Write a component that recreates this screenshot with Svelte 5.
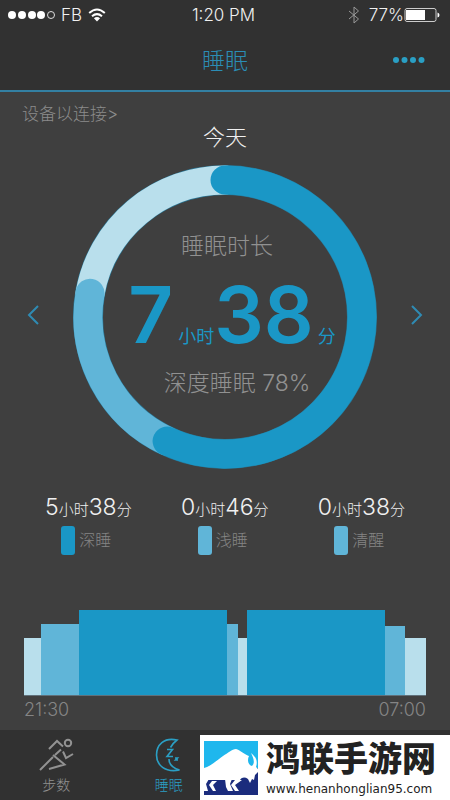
<script lang="ts">
  type Level = 'deep' | 'light' | 'awake';

  const ring = { size: 304, radius: 137, stroke: 29 };

  // degrees clockwise from twelve o'clock, painted back to front
  const arcs: { level: Level; from: number; to: number }[] = [
    { level: 'awake', from: 280, to: 360 },
    { level: 'light', from: 205, to: 280 },
    { level: 'deep', from: 0, to: 205 },
  ];

  const stats = [
    { hours: 5, minutes: 38, label: '深睡', tone: 'deep' },
    { hours: 0, minutes: 46, label: '浅睡', tone: 'light' },
    { hours: 0, minutes: 38, label: '清醒', tone: 'light' },
  ];

  const phases: { level: Level; span: number; height: number }[] = [
    { level: 'awake', span: 17, height: 57 },
    { level: 'light', span: 38, height: 71 },
    { level: 'deep', span: 148, height: 85 },
    { level: 'light', span: 11, height: 71 },
    { level: 'awake', span: 9, height: 57 },
    { level: 'deep', span: 138, height: 85 },
    { level: 'light', span: 20, height: 69 },
    { level: 'awake', span: 21, height: 57 },
  ];

  function arcPath(from: number, to: number) {
    const c = ring.size / 2;
    const point = (deg: number) => {
      const a = ((deg - 90) * Math.PI) / 180;
      return `${c + ring.radius * Math.cos(a)} ${c + ring.radius * Math.sin(a)}`;
    };
    return `M${point(from)} A${ring.radius} ${ring.radius} 0 ${to - from > 180 ? 1 : 0} 1 ${point(to)}`;
  }
</script>

<div class="screen">
  <header>
    <div class="status">
      <div class="carrier">
        <svg class="signal" viewBox="0 0 48 10" aria-hidden="true">
          <circle cx="5" cy="5" r="4" /><circle cx="15" cy="5" r="4" />
          <circle cx="25" cy="5" r="4" /><circle cx="34" cy="5" r="4" />
          <circle class="empty" cx="44" cy="5" r="3.5" />
        </svg>
        <span>FB</span>
        <svg class="wifi" viewBox="0 0 18 14" aria-hidden="true">
          <path d="M1.2 5Q9-2 16.8 5M4 8.2Q9 4 14 8.2" />
          <path class="dot" d="M9 13.6 5.9 10.3Q9 7.8 12.1 10.3Z" />
        </svg>
      </div>
      <span>1:20 PM</span>
      <div class="power">
        <svg class="bluetooth" viewBox="0 0 12 18" aria-hidden="true">
          <path d="M1 5 10.5 13 6 17V1L10.5 5 1 13" />
        </svg>
        <span>77%</span>
        <svg class="battery" viewBox="0 0 36 14" aria-hidden="true">
          <rect class="case" x="1" y=".5" width="31" height="13" rx="2" />
          <rect x="2" y="2" width="19" height="10" />
          <path d="M33.5 4.5Q35.5 5 35.5 7T33.5 9.5Z" />
        </svg>
      </div>
    </div>
    <div class="title">
      <h1>睡眠</h1>
      <button type="button" class="more" aria-label="更多">
        <svg viewBox="0 0 32 6" aria-hidden="true">
          <circle cx="3" cy="3" r="3" /><circle cx="11.5" cy="3" r="3" />
          <circle cx="20" cy="3" r="3" /><circle cx="28.5" cy="3" r="3" />
        </svg>
      </button>
    </div>
  </header>

  <main>
    <a class="device" href="#device">设备以连接&gt;</a>
    <h2>今天</h2>

    <div class="day">
      <button type="button" class="step" aria-label="前一天">
        <svg viewBox="0 0 12 20" aria-hidden="true"><path d="M11 1 2 10 11 19" /></svg>
      </button>
      <div class="ring">
        <svg viewBox="0 0 {ring.size} {ring.size}" aria-hidden="true">
          <circle class="rim" cx={ring.size / 2} cy={ring.size / 2} r={ring.radius} stroke-width={ring.stroke + 1} />
          {#each arcs as arc}
            <path class={arc.level} d={arcPath(arc.from, arc.to)} stroke-width={ring.stroke} />
          {/each}
        </svg>
        <div class="summary">
          <p class="caption">睡眠时长</p>
          <div class="total">
            <strong>7</strong><span class="hours">小时</span><strong>38</strong><span class="minutes">分</span>
          </div>
          <p class="quality">深度睡眠 78%</p>
        </div>
      </div>
      <button type="button" class="step" aria-label="后一天">
        <svg viewBox="0 0 12 20" aria-hidden="true"><path d="M1 1 10 10 1 19" /></svg>
      </button>
    </div>

    <ul class="stats">
      {#each stats as s}
        <li>
          <div class="time">{s.hours}<small>小时</small>{s.minutes}<small>分</small></div>
          <div class="key"><i class={s.tone}></i>{s.label}</div>
        </li>
      {/each}
    </ul>

    <section class="chart" aria-label="睡眠阶段">
      <div class="bars">
        {#each phases as p}
          <div class={p.level} style="flex-grow: {p.span}; height: {p.height}px"></div>
        {/each}
      </div>
      <div class="axis"><span>21:30</span><span>07:00</span></div>
    </section>
  </main>

  <nav>
    <a href="#steps">
      <svg viewBox="0 0 36 34" aria-hidden="true">
        <path d="M11 11 19 3 25 8.5M2 32 15 19M17 17 23 11.5M15 17 26.5 26.5 11 31M25 13.5 28 20 35 16" />
        <circle cx="30" cy="5" r="3.2" />
      </svg>
      步数
    </a>
    <a href="#sleep" class="active" aria-current="page">
      <svg viewBox="0 0 36 34" aria-hidden="true">
        <path d="M19.5 9.5Q22 5 26 2C13-1 5.500 7 5.500 17S14 35 28.500 32Q18 29 18 21" />
        <path d="M16 11.5H21.5L16 18.500H22" />
        <path d="M24 20H26.500L24.500 22H27" />
      </svg>
      睡眠
    </a>
  </nav>

  <aside class="promo">
    <svg viewBox="0 0 54 54" aria-hidden="true">
      <path fill="#1fb7ed" d="M0 0H54V38H0Z" />
      <path fill="#1b2c7d" d="M0 38H36L54 27V54H0Z" />
      <g fill="#fff">
        <path d="M0 27C8 25 14 18 19 15C24 12 28 8 32 8C36 9 40 13 45 15C43 19 44 24 48 25C51 22 50 18 47 12C52 16 54 20 52 26L54 28V31L51 34 50 39 48 38 46 42 44 38C41 36 38 36 36 39H0Z" />
        <path d="M21 38H28L26 43 29 50H24L22 46Z" />
        <path d="M31 39H38L31 44 35 50H31L27 44Z" />
        <path d="M0 38H5L2 43 4 50H0Z" />
        <path d="M8 40H13L9 44 12 50H9L5 44Z" />
      </g>
    </svg>
    <div>
      <b>鸿联手游网</b>
      <span>www.henanhonglian95.com</span>
    </div>
  </aside>
</div>

<style>
  :global(body) { margin: 0; background: #3f3f3f; }

  .screen {
    --deep: #1a97c6;
    --light: #60b5d8;
    --awake: #b9dfec;
    position: relative;
    display: flex;
    flex-direction: column;
    min-height: 100vh;
    background: #3f3f3f;
    color: #f0f0f0;
    font-family: Inter, "Noto Sans CJK SC", sans-serif;
    font-weight: 300;
  }
  svg { display: block; fill: none; }
  button { padding: 0; border: 0; background: none; cursor: pointer; }
  a { color: inherit; text-decoration: none; }
  h1, h2, p, ul { margin: 0; padding: 0; font-weight: 300; }

  header { background: #313131; border-bottom: 2px solid #3380a3; }
  .status {
    display: grid;
    grid-template-columns: 1fr auto 1fr;
    align-items: center;
    height: 30px;
    padding: 0 10px 0 7px;
    font-size: 17px;
  }
  .carrier, .power { display: flex; align-items: center; gap: 6px; }
  .power { justify-content: flex-end; gap: 0; }
  .signal { width: 48px; height: 10px; fill: #fff; }
  .signal .empty { fill: none; stroke: #ddd; }
  .wifi { width: 18px; height: 14px; stroke: #fff; stroke-width: 2; }
  .wifi .dot { fill: #fff; stroke: none; }
  .bluetooth { width: 12px; height: 18px; margin-right: 9px; stroke: #999; }
  .battery { width: 36px; height: 14px; fill: #fff; }
  .battery .case { fill: none; stroke: #ccc; }

  .title {
    display: grid;
    grid-template-columns: 1fr auto 1fr;
    align-items: center;
    height: 60px;
    padding: 0 25px;
  }
  h1 { grid-column: 2; padding-bottom: 3px; font-size: 23px; color: #2b8db5; }
  .more { justify-self: end; }
  .more svg { width: 32px; height: 6px; fill: #2a9fc4; }

  main { flex: 1; }
  .device { display: block; margin: 12px 22px 0; font-size: 17px; line-height: 20px; color: #8c8c8c; }
  h2 { font-size: 22px; line-height: 26px; text-align: center; }

  .day { display: flex; align-items: center; justify-content: space-between; margin-top: 15px; padding: 0 27px; }
  .step { padding-bottom: 4px; }
  .step svg { width: 12px; height: 20px; stroke: #2f8bb3; stroke-width: 2; }
  .ring { display: grid; width: 304px; }
  .ring > * { grid-area: 1 / 1; }
  .ring path { stroke-linecap: round; }
  .ring .rim { stroke: #2a7593; }
  .ring .deep { stroke: var(--deep); }
  .ring .light { stroke: var(--light); }
  .ring .awake { stroke: var(--awake); }

  .summary { display: flex; flex-direction: column; align-items: center; padding-top: 65px; }
  .summary p { font-size: 23px; line-height: 32px; color: #919191; }
  .summary .caption { padding-left: 4px; }
  .summary .quality { padding-left: 24px; }
  .total { display: flex; align-items: baseline; height: 105px; padding-left: 14px; line-height: 105px; color: var(--deep); }
  .total strong { font-size: 78px; font-weight: 600; }
  .total span { font-size: 18px; font-weight: 400; }
  .hours { padding-left: 5px; }
  .minutes { padding-left: 4px; }

  .stats { display: flex; justify-content: space-between; margin-top: 22px; padding: 0 45px; list-style: none; }
  .time { font-size: 23px; line-height: 32px; white-space: nowrap; }
  .time small { font-size: 15px; }
  .key { display: flex; align-items: center; justify-content: center; gap: 4px; padding-right: 4px; font-size: 16px; line-height: 29px; color: #858585; }
  .key i { width: 14px; height: 29px; border-radius: 3px; }

  .deep { background: var(--deep); }
  .light { background: var(--light); }
  .awake { background: var(--awake); }
  .ring path { background: none; }

  .chart { margin: 55px 24px 0; }
  .bars { display: flex; align-items: flex-end; height: 85px; border-bottom: 1px solid #60707a; }
  .bars > div { flex-basis: 0; }
  .axis { display: flex; justify-content: space-between; font-size: 18px; line-height: 28px; color: #858585; }

  nav { display: grid; grid-template-columns: repeat(4, 1fr); height: 70px; background: #313131; color: #929292; }
  nav a { display: flex; flex-direction: column; align-items: center; gap: 3px; padding-top: 8px; font-size: 14px; line-height: 20px; }
  nav svg { width: 36px; height: 34px; stroke: currentColor; stroke-width: 2; }
  nav .active { color: #2b9fc4; }
  nav .active svg { stroke-width: 1.6; }

  .promo {
    position: absolute;
    right: 0;
    bottom: 0;
    display: flex;
    align-items: center;
    gap: 8px;
    box-sizing: border-box;
    width: 250px;
    height: 65px;
    padding: 0 4px;
    background: #fff;
    color: #222;
  }
  .promo svg { flex: none; width: 54px; height: 54px; }
  .promo b { display: block; font-family: "Noto Sans CJK SC", sans-serif; font-size: 34px; font-weight: 900; line-height: 36px; }
  .promo span { display: block; padding-top: 7px; font-family: "DejaVu Sans", sans-serif; font-size: 12px; font-weight: 400; line-height: 14px; }
</style>
